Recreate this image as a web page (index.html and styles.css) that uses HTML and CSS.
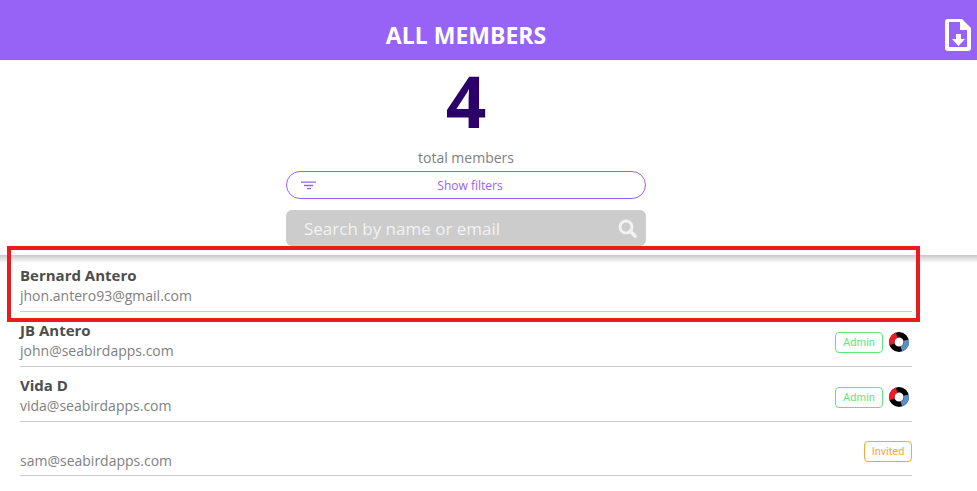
FILE: index.html
```html
<!DOCTYPE html>
<html lang="en">
<head>
<meta charset="utf-8">
<meta name="viewport" content="width=device-width, initial-scale=1">
<title>All Members</title>
<link rel="stylesheet" href="styles.css">
</head>
<body>
<header class="topbar">
  <h1 class="title">ALL MEMBERS</h1>
  <button class="export" type="button" aria-label="Download member list">
    <svg viewBox="0 0 26 32" width="26" height="32">
      <path fill="#fff" fill-rule="evenodd" d="M3 0H17L26 9V29Q26 32 23 32H3Q0 32 0 29V3Q0 0 3 0ZM4 3V28H22V11H15V3Z"/>
      <path fill="#fff" d="M11 15H16V20H20L13.500 27L7 20H11Z"/>
    </svg>
  </button>
</header>
<main>
  <section class="summary">
    <p class="count">4</p>
    <p class="caption">total members</p>
    <button class="filters" type="button">
      <svg viewBox="0 0 16 9" width="16" height="9"><path fill="#9763f6" d="M0 0.500H15V1.800H0ZM3 3.700H12V5.200H3ZM6 7H10V8.300H6Z"/></svg>
      <span>Show filters</span>
    </button>
    <label class="search">
      <input type="search" placeholder="Search by name or email" aria-label="Search by name or email">
      <svg viewBox="0 0 19 19" width="19" height="19"><circle cx="8" cy="8" r="6" fill="none" stroke="#f2f2f2" stroke-width="3"/><path d="M12 12L17 17" stroke="#f2f2f2" stroke-width="3.500" stroke-linecap="round"/></svg>
    </label>
  </section>
  <ul class="members">
    <li class="member highlighted">
      <div class="person"><h2 class="name">Bernard Antero</h2><p class="email">jhon.antero93@gmail.com</p></div>
    </li>
    <li class="member">
      <div class="person"><h2 class="name">JB Antero</h2><p class="email">john@seabirdapps.com</p></div>
      <span class="badge admin">Admin</span>
      <svg class="ring" viewBox="0 0 20 20" width="20" height="20"><g fill="none" stroke-width="5.400"><circle cx="10" cy="10" r="7.300" stroke="#000"/><path stroke="#ed1c24" d="M3.100 12.300A7.300 7.300 0 0 1 7.700 3.100"/><path stroke="#5b8fc0" d="M17.100 8.200A7.300 7.300 0 0 1 12.300 16.900"/></g></svg>
    </li>
    <li class="member">
      <div class="person"><h2 class="name">Vida D</h2><p class="email">vida@seabirdapps.com</p></div>
      <span class="badge admin">Admin</span>
      <svg class="ring" viewBox="0 0 20 20" width="20" height="20"><g fill="none" stroke-width="5.400"><circle cx="10" cy="10" r="7.300" stroke="#000"/><path stroke="#ed1c24" d="M3.100 12.300A7.300 7.300 0 0 1 7.700 3.100"/><path stroke="#5b8fc0" d="M17.100 8.200A7.300 7.300 0 0 1 12.300 16.900"/></g></svg>
    </li>
    <li class="member">
      <div class="person"><h2 class="name"></h2><p class="email">sam@seabirdapps.com</p></div>
      <span class="badge invited">Invited</span>
    </li>
  </ul>
</main>
</body>
</html>
```
FILE: styles.css
```css
* { box-sizing: border-box; }
body, h1, h2, p, ul { margin: 0; padding: 0; }
body {
  background: #fff;
  color: #808080;
  font-family: "Open Sans", "Noto Sans", sans-serif;
}
button { padding: 0; border: 0; background: none; font: inherit; }
svg { display: block; flex: none; }

.topbar {
  display: flex;
  align-items: center;
  height: 60px;
  padding: 10px 6px 0 0;
  background: #9763f6;
}
.title {
  flex: 1;
  color: #fff;
  font-size: 23px;
  line-height: 32px;
  text-align: center;
}
.export { width: 39px; display: flex; justify-content: flex-end; }

.summary {
  display: flex;
  flex-direction: column;
  align-items: center;
  height: 195px;
  padding-right: 45px;
}
.count {
  margin-bottom: 6px;
  color: #2b0068;
  font-size: 71px;
  font-weight: 700;
  line-height: 82px;
}
.caption { font-size: 14px; line-height: 20px; margin-bottom: 3px; }
.filters {
  display: flex;
  align-items: center;
  width: 360px;
  height: 28px;
  padding: 0 14px;
  border: 1px solid #9763f6;
  border-radius: 14px;
  color: #9763f6;
  font-size: 12px;
}
.filters span { flex: 1; padding-right: 8px; text-align: center; }
.search {
  display: flex;
  align-items: center;
  width: 360px;
  height: 36px;
  margin-top: 11px;
  padding: 0 9px 0 18px;
  border-radius: 6px;
  background: #ccc;
}
.search input {
  flex: 1;
  min-width: 0;
  padding: 0;
  border: 0;
  outline: 0;
  background: none;
  color: #f2f2f2;
  font: 17px "Open Sans", "Noto Sans", sans-serif;
}
.search input::placeholder { color: #f2f2f2; opacity: 1; }

.members {
  list-style: none;
  padding: 2px 65px 12px 20px;
  background: linear-gradient(#c8c8c8, #fff) top / 100% 8px no-repeat;
}
.member {
  position: relative;
  display: flex;
  align-items: center;
  height: 55px;
  border-bottom: 1px solid #ccc;
}
.member:last-child { height: 54px; }
.person { flex: 1; padding-top: 4px; }
.name {
  height: 20px;
  color: #4d4d4d;
  font-size: 15px;
  line-height: 20px;
}
.email { font-size: 14px; line-height: 22px; }
.badge {
  width: 48px;
  margin-top: 6px;
  border: 1px solid;
  border-radius: 4px;
  font: 11px/19px Roboto, sans-serif;
  text-align: center;
}
.admin { color: #5de67c; }
.invited { color: #faa443; }
.ring { margin: 6px 3px 0 6px; }

.highlighted::after {
  content: "";
  position: absolute;
  inset: -11px -8px -11px -13px;
  border: 4px solid #e81c1c;
  pointer-events: none;
}
```
